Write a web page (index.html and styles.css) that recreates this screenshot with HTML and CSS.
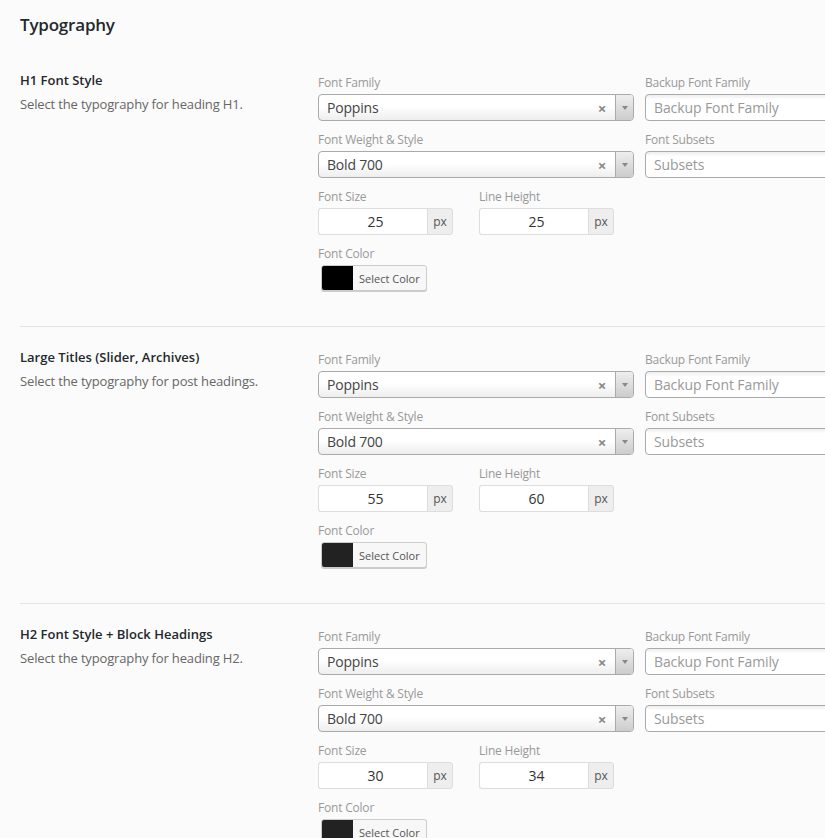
FILE: index.html
```html
<!DOCTYPE html>
<html lang="en">
<head>
  <meta charset="UTF-8">
  <title>Typography</title>
  <link rel="stylesheet" href="styles.css">
</head>
<body>
  <h2 class="page-title">Typography</h2>

  <div class="section first">
    <div class="section-info">
      <h3>H1 Font Style</h3>
      <p>Select the typography for heading H1.</p>
    </div>
    <div class="fields">
      <div class="row">
        <div class="field wide">
          <label>Font Family</label>
          <div class="select"><span class="value">Poppins</span><span class="clear">&#215;</span><span class="arrow"><b></b></span></div>
        </div>
        <div class="field wide">
          <label>Backup Font Family</label>
          <div class="multi">Backup Font Family</div>
        </div>
      </div>
      <div class="row">
        <div class="field wide">
          <label>Font Weight &amp; Style</label>
          <div class="select"><span class="value">Bold 700</span><span class="clear">&#215;</span><span class="arrow"><b></b></span></div>
        </div>
        <div class="field wide">
          <label>Font Subsets</label>
          <div class="multi">Subsets</div>
        </div>
      </div>
      <div class="row">
        <div class="field small">
          <label>Font Size</label>
          <div class="unit-input"><span class="num">25</span><span class="unit">px</span></div>
        </div>
        <div class="field small">
          <label>Line Height</label>
          <div class="unit-input"><span class="num">25</span><span class="unit">px</span></div>
        </div>
      </div>
      <div class="row">
        <div class="field">
          <label>Font Color</label>
          <button class="color-btn"><span class="swatch black"></span>Select Color</button>
        </div>
      </div>
    </div>
  </div>

  <div class="section">
    <div class="section-info">
      <h3>Large Titles (Slider, Archives)</h3>
      <p>Select the typography for post headings.</p>
    </div>
    <div class="fields">
      <div class="row">
        <div class="field wide">
          <label>Font Family</label>
          <div class="select"><span class="value">Poppins</span><span class="clear">&#215;</span><span class="arrow"><b></b></span></div>
        </div>
        <div class="field wide">
          <label>Backup Font Family</label>
          <div class="multi">Backup Font Family</div>
        </div>
      </div>
      <div class="row">
        <div class="field wide">
          <label>Font Weight &amp; Style</label>
          <div class="select"><span class="value">Bold 700</span><span class="clear">&#215;</span><span class="arrow"><b></b></span></div>
        </div>
        <div class="field wide">
          <label>Font Subsets</label>
          <div class="multi">Subsets</div>
        </div>
      </div>
      <div class="row">
        <div class="field small">
          <label>Font Size</label>
          <div class="unit-input"><span class="num">55</span><span class="unit">px</span></div>
        </div>
        <div class="field small">
          <label>Line Height</label>
          <div class="unit-input"><span class="num">60</span><span class="unit">px</span></div>
        </div>
      </div>
      <div class="row">
        <div class="field">
          <label>Font Color</label>
          <button class="color-btn"><span class="swatch"></span>Select Color</button>
        </div>
      </div>
    </div>
  </div>

  <div class="section">
    <div class="section-info">
      <h3>H2 Font Style + Block Headings</h3>
      <p>Select the typography for heading H2.</p>
    </div>
    <div class="fields">
      <div class="row">
        <div class="field wide">
          <label>Font Family</label>
          <div class="select"><span class="value">Poppins</span><span class="clear">&#215;</span><span class="arrow"><b></b></span></div>
        </div>
        <div class="field wide">
          <label>Backup Font Family</label>
          <div class="multi">Backup Font Family</div>
        </div>
      </div>
      <div class="row">
        <div class="field wide">
          <label>Font Weight &amp; Style</label>
          <div class="select"><span class="value">Bold 700</span><span class="clear">&#215;</span><span class="arrow"><b></b></span></div>
        </div>
        <div class="field wide">
          <label>Font Subsets</label>
          <div class="multi">Subsets</div>
        </div>
      </div>
      <div class="row">
        <div class="field small">
          <label>Font Size</label>
          <div class="unit-input"><span class="num">30</span><span class="unit">px</span></div>
        </div>
        <div class="field small">
          <label>Line Height</label>
          <div class="unit-input"><span class="num">34</span><span class="unit">px</span></div>
        </div>
      </div>
      <div class="row">
        <div class="field">
          <label>Font Color</label>
          <button class="color-btn"><span class="swatch"></span>Select Color</button>
        </div>
      </div>
    </div>
  </div>
</body>
</html>
```

FILE: styles.css
```css
body {
  background-color: #fbfbfb;
  color: #23282d;
  font-family: 'Open Sans', 'Noto Sans', sans-serif;
  font-size: 13px;
  margin: 0;
  padding: 13px 0 0 20px;
  overflow: hidden;
}

.page-title {
  font-size: 17px;
  line-height: 24px;
  font-weight: 600;
  margin: 0 0 12px;
  letter-spacing: -0.2px;
}

.section {
  display: flex;
  border-top: 1px solid #e3e3e3;
  padding: 25px 0 35px;
}

.section.first {
  border-top: 1px solid transparent;
}

.section-info {
  width: 298px;
  flex-shrink: 0;
}

.section-info h3 {
  font-size: 13px;
  line-height: 17px;
  font-weight: 600;
  margin: -3px 0 6px;
  letter-spacing: 0;
}

.section-info p {
  margin: 0;
  color: #666;
  font-size: 13px;
  line-height: 18px;
  letter-spacing: -0.15px;
}

.fields {
  display: flex;
  flex-direction: column;
  gap: 11px;
  flex-shrink: 0;
}

.row {
  display: flex;
  gap: 11px;
}

.field label {
  display: block;
  color: #999;
  font-size: 12px;
  line-height: 16px;
  margin-bottom: 3px;
  letter-spacing: -0.2px;
}

.field.wide {
  width: 316px;
}

.field.small {
  width: 135px;
}

.field.small + .field.small {
  margin-left: 15px;
}

/* single select with clear button and arrow */
.select {
  display: flex;
  align-items: center;
  height: 27px;
  box-sizing: border-box;
  border: 1px solid #aaa;
  border-radius: 4px;
  background: linear-gradient(to bottom, #fff 0%, #fff 45%, #eee 100%);
  color: #444;
  font-size: 14px;
}

.select .value {
  flex: 1;
  padding-left: 8px;
  letter-spacing: -0.2px;
}

.select .clear {
  color: #888;
  font-size: 15px;
  font-weight: bold;
  width: 20px;
  text-align: center;
  margin-right: 3px;
}

.select .arrow {
  width: 17px;
  align-self: stretch;
  border-left: 1px solid #aaa;
  border-radius: 0 3px 3px 0;
  background: linear-gradient(to bottom, #eee 0%, #ccc 100%);
  display: flex;
  align-items: center;
  justify-content: center;
}

.select .arrow b {
  width: 0;
  height: 0;
  border-left: 3px solid transparent;
  border-right: 3px solid transparent;
  border-top: 4px solid #888;
}

/* multi select placeholder */
.multi {
  height: 27px;
  box-sizing: border-box;
  border: 1px solid #aaa;
  border-radius: 4px;
  background: linear-gradient(to bottom, #eee 0%, #fff 18%);
  color: #999;
  font-size: 14px;
  line-height: 25px;
  padding-left: 8px;
  letter-spacing: -0.1px;
}

.unit-input {
  display: flex;
  height: 27px;
}

.unit-input .num {
  width: 109px;
  box-sizing: border-box;
  border: 1px solid #ddd;
  border-right: none;
  border-radius: 3px 0 0 3px;
  background: #fff;
  text-align: center;
  color: #333;
  font-size: 14px;
  line-height: 25px;
  padding-left: 5px;
}

.unit-input .unit {
  width: 26px;
  box-sizing: border-box;
  border: 1px solid #ddd;
  border-radius: 0 3px 3px 0;
  background: #eee;
  color: #555;
  font-size: 12px;
  line-height: 25px;
  text-align: center;
}

.color-btn {
  display: flex;
  align-items: center;
  margin: 1px 0 0 3px;
  padding: 0;
  height: 26px;
  width: 106px;
  box-sizing: border-box;
  border: 1px solid #ccc;
  border-radius: 3px;
  background: #f7f7f7;
  box-shadow: 0 1px 0 #ccc;
  font-family: 'Open Sans', 'Noto Sans', sans-serif;
  font-size: 11px;
  color: #555;
  white-space: nowrap;
  cursor: pointer;
}

.color-btn .swatch {
  width: 31px;
  height: 24px;
  flex-shrink: 0;
  background: #222;
  margin-right: 6px;
  border-radius: 2px 0 0 2px;
}

.color-btn .swatch.black {
  background: #000;
}
```
